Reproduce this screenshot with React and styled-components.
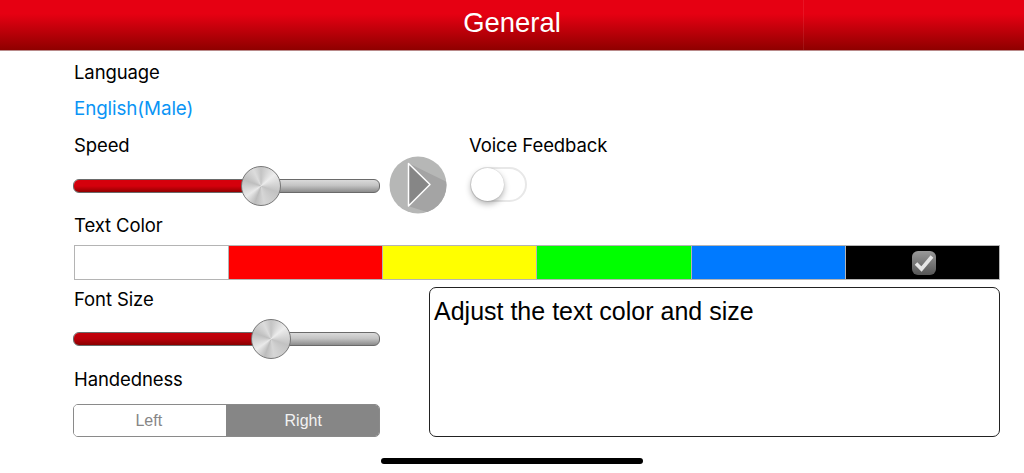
import React, { useState } from "react";
import styled, { createGlobalStyle } from "styled-components";

const GlobalStyle = createGlobalStyle`
  html, body {
    margin: 0;
    padding: 0;
    background: #fff;
    overflow: hidden;
  }
  * {
    box-sizing: border-box;
  }
`;

const Page = styled.div`
  width: 1024px;
  height: 473px;
  display: flex;
  flex-direction: column;
  font-family: Inter, "Liberation Sans", sans-serif;
  color: #000;
`;

const Header = styled.header`
  position: relative;
  height: 51px;
  flex: none;
  display: flex;
  align-items: center;
  justify-content: center;
  background: linear-gradient(#e60012 0%, #e60012 28%, #8f0000 100%);
  border-bottom: 1px solid #b98a8a;
  color: #fff;
  font-family: "Liberation Sans", sans-serif;
  font-size: 27.4px;
  padding-bottom: 4px;
`;

const HeaderDivider = styled.span`
  position: absolute;
  left: 803px;
  top: 0;
  bottom: 0;
  width: 1px;
  background: rgba(255, 255, 255, 0.08);
`;

const Content = styled.main`
  flex: 1;
  display: flex;
  flex-direction: column;
  padding: 2px 24px 0 73px;
`;

const Label = styled.div`
  height: ${(p) => p.$height || 36}px;
  display: flex;
  align-items: center;
  padding-left: 1px;
  font-size: 18.5px;
  letter-spacing: -0.1px;
  white-space: nowrap;
`;

const LanguageValue = styled(Label)`
  color: #0a94f5;
  height: 37px;
  font-size: 18.8px;
`;

const SpeedRow = styled.div`
  display: flex;
  height: 82px;
`;

const SliderColumn = styled.div`
  width: 307px;
  flex: none;
`;

const SliderBox = styled.div`
  position: relative;
  height: ${(p) => p.$height}px;
  display: flex;
  align-items: center;
`;

const Track = styled.div`
  width: 100%;
  height: 14px;
  border-radius: 6px;
  border: 1px solid #6a6a6a;
  background: linear-gradient(#dadada, #c4c4c4 45%, #8c8c8c);
  overflow: hidden;
`;

const TrackFill = styled.div`
  height: 100%;
  background: ${(p) =>
    p.$deep
      ? "linear-gradient(#c4000a, #b8000a 50%, #8a0000)"
      : "linear-gradient(#d5000c, #d5000c 50%, #930000)"};
`;

const Thumb = styled.div`
  position: absolute;
  top: 50%;
  width: 40px;
  height: 40px;
  margin: -20px 0 0 -20px;
  border-radius: 50%;
  border: 1px solid #777;
  background: conic-gradient(
    #c4c4c4 0deg,
    #ededed 50deg,
    #c2c2c2 110deg,
    #d6d6d6 170deg,
    #bcbcbc 200deg,
    #eaeaea 235deg,
    #bebebe 290deg,
    #dcdcdc 335deg,
    #c4c4c4 360deg
  );
`;

const PlayButton = styled.button`
  width: 58px;
  height: 58px;
  flex: none;
  margin: 29px 0 0 9px;
  padding: 0;
  border: 0;
  background: none;
  line-height: 0;
`;

const VoiceColumn = styled.div`
  margin-left: 21px;
`;

const Toggle = styled.button`
  position: relative;
  display: block;
  width: 57px;
  height: 35px;
  margin: 4px 0 0 2px;
  padding: 0;
  border-radius: 18px;
  border: 2px solid #e8e8e8;
  background: #fff;
`;

const ToggleKnob = styled.span`
  position: absolute;
  top: -1px;
  left: -1px;
  width: 33px;
  height: 33px;
  border-radius: 50%;
  background: #fff;
  box-shadow: 0 3px 6px rgba(0, 0, 0, 0.3), 0 0 1px rgba(0, 0, 0, 0.25);
`;

const ColorLabel = styled(Label)`
  height: 32px;
`;

const ColorBar = styled.div`
  display: flex;
  height: 35px;
  margin: 4px 0 0 0.5px;
  flex: none;
  border: 1px solid #b4b4b4;
  gap: 1px;
  background: #b4b4b4;
`;

const Swatch = styled.div`
  flex: 1;
  display: flex;
  align-items: center;
  justify-content: center;
  background: ${(p) => p.$color};
`;

const CheckBadge = styled.span`
  width: 24px;
  height: 24px;
  margin-left: 3px;
  border-radius: 6px;
  background: linear-gradient(#9a9a9a, #565656);
  line-height: 0;
  display: flex;
  align-items: center;
  justify-content: center;
`;

const BottomRow = styled.div`
  display: flex;
  margin-top: 7px;
`;

const ControlsColumn = styled.div`
  width: 307px;
  flex: none;
`;

const Segmented = styled.div`
  display: flex;
  height: 33px;
  margin-top: 13px;
  border: 1px solid #8a8a8a;
  border-radius: 5px;
  overflow: hidden;
`;

const Segment = styled.button`
  flex: ${(p) => (p.$active ? "1 1 154px" : "1 1 152px")};
  border: 0;
  padding: ${(p) => (p.$active ? "0 0 0 2px" : "0 2px 0 0")};
  font-family: "Liberation Sans", sans-serif;
  font-size: 16px;
  background: ${(p) => (p.$active ? "#868686" : "#fff")};
  color: ${(p) => (p.$active ? "#f2f2f2" : "#868686")};
`;

const PreviewBox = styled.div`
  width: 572px;
  height: 150px;
  margin-left: 49px;
  padding: 8px 4px;
  border: 1px solid #222;
  border-radius: 7px;
  font-family: "Liberation Sans", sans-serif;
  font-size: 25px;
  line-height: 30px;
`;

const HomeIndicator = styled.div`
  position: absolute;
  left: 381px;
  top: 458px;
  width: 262px;
  height: 6px;
  border-radius: 3px;
  background: #000;
`;

const colors = ["#ffffff", "#ff0000", "#ffff00", "#00ff00", "#007aff", "#000000"];

function Slider({ value, height, deep }) {
  return (
    <SliderBox $height={height}>
      <Track>
        <TrackFill $deep={deep} style={{ width: value }} />
      </Track>
      <Thumb style={{ left: value }} />
    </SliderBox>
  );
}

function PlayIcon() {
  return (
    <svg width="58" height="58" viewBox="0 0 58 58">
      <defs>
        <clipPath id="playCircle">
          <circle cx="29" cy="29" r="28.5" />
        </clipPath>
      </defs>
      <circle cx="29" cy="29" r="28.5" fill="#b6b7b6" />
      <path d="M19 7 L58 26 V58 H44 L19 50 Z" fill="#a4a4a4" clipPath="url(#playCircle)" />
      <path
        d="M19.5 7.5 L41 28.5 L19.5 50 Z"
        fill="#868686"
        stroke="#fff"
        strokeWidth="1.5"
        strokeLinejoin="round"
      />
    </svg>
  );
}

function App() {
  const [hand, setHand] = useState("Right");

  return (
    <Page>
      <GlobalStyle />
      <Header>
        General
        <HeaderDivider />
      </Header>
      <Content>
        <Label $height={37}>Language</Label>
        <LanguageValue>English(Male)</LanguageValue>
        <SpeedRow>
          <SliderColumn>
            <Label>Speed</Label>
            <Slider value={188} height={46} />
          </SliderColumn>
          <PlayButton aria-label="Play">
            <PlayIcon />
          </PlayButton>
          <VoiceColumn>
            <Label>Voice Feedback</Label>
            <Toggle aria-label="Voice Feedback">
              <ToggleKnob />
            </Toggle>
          </VoiceColumn>
        </SpeedRow>
        <ColorLabel>Text Color</ColorLabel>
        <ColorBar>
          {colors.map((color) => (
            <Swatch key={color} $color={color}>
              {color === "#000000" && (
                <CheckBadge>
                  <svg width="22" height="20" viewBox="0 0 22 20">
                    <path
                      d="M3 10.5 L8.5 16 L19 3.5"
                      fill="none"
                      stroke="#e6e6e6"
                      strokeWidth="3.6"
                    />
                  </svg>
                </CheckBadge>
              )}
            </Swatch>
          ))}
        </ColorBar>
        <BottomRow>
          <ControlsColumn>
            <Label $height={24}>Font Size</Label>
            <Slider value={198} height={56} deep />
            <Label $height={24}>Handedness</Label>
            <Segmented>
              {["Left", "Right"].map((side) => (
                <Segment key={side} $active={hand === side} onClick={() => setHand(side)}>
                  {side}
                </Segment>
              ))}
            </Segmented>
          </ControlsColumn>
          <PreviewBox>Adjust the text color and size</PreviewBox>
        </BottomRow>
      </Content>
      <HomeIndicator />
    </Page>
  );
}

export default App;
